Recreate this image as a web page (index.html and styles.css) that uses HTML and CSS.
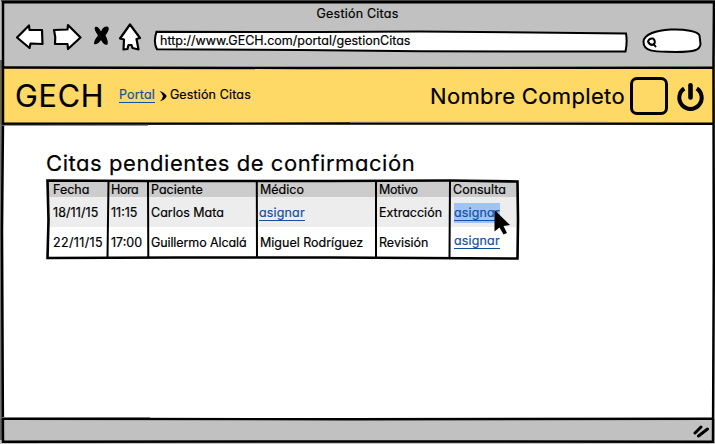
FILE: index.html
```html
<!DOCTYPE html>
<html lang="es">
<head>
<meta charset="utf-8">
<title>Gestión Citas</title>
<link rel="stylesheet" href="styles.css">
</head>
<body>
<div class="window">
  <header class="chrome">
    <div class="window-title">Gestión Citas</div>
    <div class="toolbar">
      <svg class="nav-icons" width="132" height="32" viewBox="14 20 132 32">
        <g fill="#fff" stroke="#000" stroke-width="2.200" stroke-linejoin="round">
          <path d="M17 37.500 L29 25.500 L29.500 30 L42 30 L42.500 44 L30.500 43.500 L29.500 48 Z"/>
          <path d="M54 30 L67.500 29.500 L68 25 L80.500 37.500 L68 49 L67.500 44 L55 44 Q56 37 54 30 Z"/>
          <path d="M130 24.500 L140 38 L136.500 39 L138.500 49.500 L132.500 48 L131.500 45 L128.500 45 L127.500 49 L123.500 49.500 L124 39.500 L120 38.500 Z"/>
        </g>
        <path d="M95 27 Q98 25.500 101 31.500 Q103 26 107.500 26.500 Q111 28 105.500 35.500 Q108.500 41 107.500 44.500 Q104 46 101 40 Q97 45.500 94 44 Q94 40 98 35.500 Q93.500 29 95 27 Z"/>
      </svg>
      <div class="address">
        <svg class="address-shape" width="476" height="24" viewBox="152 29 476 24"><path d="M156.500 31.800 L320 32 L420 31.500 L626 33.500 Q627.500 42 625.500 51.500 L420 51.300 L300 50 L157 49.300 Q153 42 156.500 31.800 Z" fill="#fff" stroke="#000" stroke-width="2"/></svg>
        <span class="address-text">http://www.GECH.com/portal/gestionCitas</span>
      </div>
      <svg class="search" width="64" height="28" viewBox="640 27 64 28">
        <path d="M643.500 42 C643.500 26 697 27 699.500 35.500 L700.500 44 C700 50 695 52 676 52 C662 51 643.500 54 643.500 42 Z" fill="#fff" stroke="#000" stroke-width="2"/>
        <path d="M648 41.500 Q649 38 653 38.500 Q656 41 654 44.500 Q650 46 648 41.500 Z M653.500 44 L655.500 46.500" fill="none" stroke="#000" stroke-width="2" stroke-linecap="round"/>
      </svg>
    </div>
  </header>
  <div class="banner">
    <div class="brand">GECH</div>
    <nav class="crumbs">
      <a class="link">Portal</a>
      <svg class="chevron" width="9" height="12" viewBox="159 90 9 12"><path d="M159.500 91 Q164 92 166.800 96 Q164.500 100.500 160 101.200 Q162.800 98.500 163 96 Q162 93 159.500 91 Z"/></svg>
      <span>Gestión Citas</span>
    </nav>
    <div class="user">Nombre Completo</div>
    <div class="avatar"></div>
    <svg class="power" width="30" height="30" viewBox="675 82 30 30"><path d="M684.200 89.500 A11.200 11.200 0 1 0 696.800 89.500" fill="none" stroke="#000" stroke-width="4"/><path d="M690.500 86.200 V98.500" stroke="#000" stroke-width="4.600" stroke-linecap="round"/></svg>
  </div>
  <main class="content">
    <h1 class="heading">Citas pendientes de confirmación</h1>
    <div class="table">
      <div class="row head"><span>Fecha</span><span class="tight">Hora</span><span>Paciente</span><span>Médico</span><span class="snug">Motivo</span><span>Consulta</span></div>
      <div class="row alt"><span class="loose">18/11/15</span><span>11:15</span><span>Carlos Mata</span><span><a class="link">asignar</a></span><span>Extracción</span><span class="action"><a class="link selected">asignar</a></span></div>
      <div class="row"><span class="looser">22/11/15</span><span>17:00</span><span class="close">Guillermo Alcalá</span><span>Miguel Rodríguez</span><span>Revisión</span><span class="action raised"><a class="link">asignar</a></span></div>
      <svg class="rules" width="475" height="82" viewBox="45 179 475 82" fill="none" stroke="#000" stroke-width="2">
        <path d="M47.500 180.500 L150 181 L330 181 L450 180.500 L517.500 181.500 L518 220 L517.500 258.500 L330 257.500 L180 257.500 L47.500 258 L48.500 220 Z" stroke-width="2.600"/>
        <path d="M108.500 181 L107.500 258 M148 181 L148.300 258 M256.800 181 L257 258 M376 181 L376 258 M450 181 L449.500 258"/>
      </svg>
      <svg class="cursor" width="20" height="28" viewBox="493 209 20 28"><path d="M494.500 210 L494.500 231.500 L499.500 227.500 L503.500 234.500 L507 233 L503.500 226 L510 225 Z"/></svg>
    </div>
  </main>
  <footer class="status">
    <svg class="grip" width="18" height="14" viewBox="692 424 18 14" stroke="#000" stroke-width="3" stroke-linecap="round"><path d="M695 433 L701 427 M698.500 436 L707.500 429"/></svg>
  </footer>
  <svg class="frame" width="715" height="444" viewBox="0 0 715 444" fill="none">
    <path d="M1 .8 H715 M1 440 V60" stroke="#444" stroke-width="1.500"/>
    <path d="M3 2.200 L714 2.200 L713.500 60 L713.800 260 L713 441.700 L330 441.500 L3 441.800 L2 230 L3 120 Z" stroke="#000" stroke-width="2.500"/>
    <path d="M2 67.500 L300 68 L713 67.700 M2 123.800 L350 123.500 L713 123.800 M2 418.800 L350 419.200 L713 418.800" stroke="#000" stroke-width="2.400"/>
    <path d="M2 125.300 H148 M2 417.500 H150 M350 122.300 H608" stroke="#777" stroke-width="1"/>
  </svg>
</div>
</body>
</html>
```
FILE: styles.css
```css
* { box-sizing: border-box; }
body {
  margin: 0;
  background: #fff;
  color: #000;
  font: 12.5px/15px Inter, "Open Sans", sans-serif;
  font-feature-settings: "cv11";
  -webkit-text-stroke: .2px;
}
.window {
  position: relative;
  width: 715px;
  height: 444px;
  display: flex;
  flex-direction: column;
  overflow: hidden;
}
.frame { position: absolute; inset: 0; }
svg { display: block; flex: none; }

.chrome { height: 68px; padding-top: 6px; background: #c1c1c1; }
.window-title { height: 14px; text-align: center; letter-spacing: .22px; }
.toolbar { display: flex; align-items: flex-start; padding-left: 14px; }
.address { position: relative; margin: 9px 0 0 6px; width: 476px; height: 24px; }
.address-text { position: absolute; left: 8px; top: 4px; white-space: nowrap; }
.search { margin: 7px 0 0 12px; }

.banner {
  height: 56px;
  display: flex;
  align-items: center;
  padding: 0 10px 0 15px;
  background: #ffd966;
}
.brand { width: 104px; font-size: 30.5px; line-height: 36px; letter-spacing: .8px; }
.crumbs { display: flex; align-items: center; gap: 2px; margin-top: -3px; }
.crumbs span { letter-spacing: .15px; }
.chevron { margin: 3px 0 0 2px; }
.user { margin-left: auto; font-size: 22px; line-height: 28px; letter-spacing: .35px; }
.avatar { width: 38px; height: 38px; margin: 0 7px 0 5px; border: 3px solid #000; border-radius: 7px; }

.link { color: #1650a0; border-bottom: 1px solid #1650a0; letter-spacing: .15px; }

.content { flex: 1; padding: 25px 0 0 46px; }
.heading { margin: 0; height: 32px; font-size: 22px; line-height: 28px; font-weight: 400; letter-spacing: .56px; }
.table { position: relative; width: 470px; margin-left: 1px; }
.row {
  display: grid;
  grid-template-columns: 61px 40px 109px 119px 74px 67px;
  height: 30px;
  line-height: 32px;
  white-space: nowrap;
}
.row > span { padding-left: 3px; height: 30px; }
.row > span:first-child { padding-left: 6px; }
.row .link { display: inline-block; line-height: 15px; margin-left: -1px; }
.head { height: 16px; line-height: 17px; background: #ccc; }
.head > span { height: 16px; }
.alt { background: #ededed; }
.tight { letter-spacing: -.4px; }
.snug { letter-spacing: -.25px; }
.loose { letter-spacing: .1px; }
.looser { letter-spacing: .35px; }
.close { letter-spacing: -.1px; }
.row > .action { padding-left: 5px; }
.row > .raised { line-height: 28px; }
.selected { background: #9fc3f8; padding-top: 2px; box-shadow: 0 2px #9fc3f8; }
.rules { position: absolute; left: -2px; top: -2px; }
.cursor { position: absolute; left: 446px; top: 28px; }

.status { height: 25px; background: #c1c1c1; }
.grip { margin: 5px 5px 0 auto; }
```
